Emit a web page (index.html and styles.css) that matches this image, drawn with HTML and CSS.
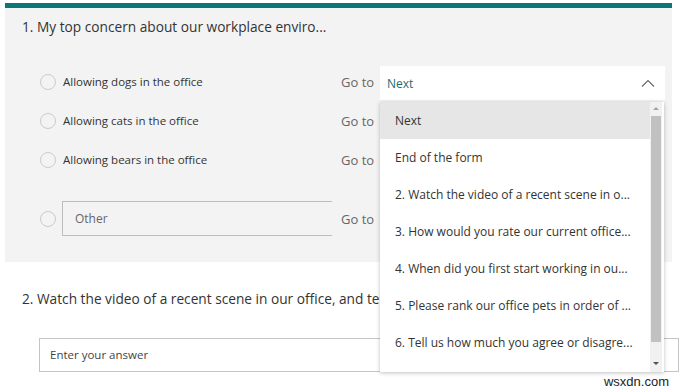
FILE: index.html
```html
<!DOCTYPE html>
<html lang="en">
<head>
    <meta charset="UTF-8">
    <meta name="viewport" content="width=device-width, initial-scale=1.0">
    <title>Branching</title>
    <link rel="stylesheet" href="styles.css">
</head>
<body>
    <div class="page">
        <div class="card">
            <div class="title">1. My top concern about our workplace enviro...</div>

            <div class="row">
                <span class="radio"></span>
                <span class="label">Allowing dogs in the office</span>
                <span class="goto">Go to</span>
                <div class="select-wrap">
                    <div class="select">
                        <span>Next</span>
                        <svg class="chevron" width="14" height="8" viewBox="0 0 14 8"><path d="M1 7.5 L7 1.5 L13 7.5" fill="none" stroke="#666" stroke-width="1.1"/></svg>
                    </div>
                    <div class="menu">
                        <div class="menu-list">
                            <div class="menu-item active">Next</div>
                            <div class="menu-item">End of the form</div>
                            <div class="menu-item">2. Watch the video of a recent scene in o...</div>
                            <div class="menu-item">3. How would you rate our current office...</div>
                            <div class="menu-item">4. When did you first start working in ou...</div>
                            <div class="menu-item">5. Please rank our office pets in order of ...</div>
                            <div class="menu-item">6. Tell us how much you agree or disagre...</div>
                            <div class="menu-item">7. How likely are you to recommend our tea...</div>
                        </div>
                        <div class="scrollbar">
                            <span class="arrow up"></span>
                            <span class="thumb"></span>
                            <span class="arrow down"></span>
                        </div>
                    </div>
                </div>
            </div>
            <div class="row">
                <span class="radio"></span>
                <span class="label">Allowing cats in the office</span>
                <span class="goto">Go to</span>
            </div>
            <div class="row">
                <span class="radio"></span>
                <span class="label">Allowing bears in the office</span>
                <span class="goto">Go to</span>
            </div>
            <div class="row other">
                <span class="radio"></span>
                <span class="label"><span class="other-box">Other</span></span>
                <span class="goto">Go to</span>
            </div>
        </div>

        <div class="question">
            <div class="title">2. Watch the video of a recent scene in our office, and tell us what you think about it</div>
            <div class="answer">Enter your answer</div>
        </div>
    </div>
    <div class="watermark">wsxdn.com</div>
</body>
</html>
```

FILE: styles.css
```css
/* Basic styles */
body {
    font-family: "Open Sans", "Noto Sans", sans-serif;
    margin: 0;
    padding: 0;
    background: #fff;
    color: #333;
    width: 680px;
    height: 392px;
    overflow: hidden;
    position: relative;
}
.page {
    padding: 3px 8px 0 5px;
}
.card {
    background-color: #f3f3f3;
    border-top: 5px solid #0b7675;
    padding: 8px 7px 14px 17px;
    height: 232px;
}
.title {
    font-size: 13.7px;
    line-height: 22px;
    white-space: nowrap;
    overflow: hidden;
    color: #333;
}
.row {
    display: grid;
    grid-template-columns: 23px 278px 39px 285px;
    align-items: center;
    height: 39px;
    margin-left: 18px;
}
.card .title {
    margin-bottom: 24px;
}
.row.other {
    margin-top: 20px;
}
.radio {
    width: 14px;
    height: 14px;
    border: 1px solid #cbcbcb;
    border-radius: 50%;
}
.label {
    font-size: 11.5px;
    color: #333;
}
.goto {
    font-size: 13px;
    color: #666;
}
.other-box {
    display: block;
    width: 257px;
    height: 33px;
    line-height: 33px;
    padding-left: 12px;
    border: 1px solid #bdbdbd;
    border-right: none;
    font-size: 12px;
    color: #666;
    margin-left: -1px;
}
.select-wrap {
    position: relative;
    margin-top: 3px;
}
.select {
    background: #fff;
    height: 34px;
    display: flex;
    align-items: center;
    justify-content: space-between;
    padding: 0 10px 0 7px;
    font-size: 12px;
    color: #1e6d70;
}
.menu {
    position: absolute;
    top: 36px;
    left: 0;
    width: 284px;
    height: 270px;
    background: #fff;
    box-shadow: 0 1px 4px rgba(0, 0, 0, 0.25);
    display: flex;
    overflow: hidden;
    z-index: 2;
}
.menu-list {
    flex: 1;
}
.menu-item {
    height: 37px;
    line-height: 37px;
    padding-left: 15px;
    font-size: 12px;
    color: #333;
    white-space: nowrap;
    overflow: hidden;
}
.menu-item.active {
    background: #e6e6e6;
}
.scrollbar {
    width: 12px;
    margin: 0 2px 0 0;
    background: #f1f1f1;
    display: flex;
    flex-direction: column;
    align-items: center;
}
.arrow {
    width: 0;
    height: 0;
    border-left: 3px solid transparent;
    border-right: 3px solid transparent;
}
.arrow.up {
    border-bottom: 3px solid #a3a3a3;
    margin: 5px 0 6px;
}
.arrow.down {
    border-top: 3px solid #505050;
    margin: 20px 0 0;
}
.thumb {
    width: 10px;
    height: 226px;
    background: #c1c1c1;
}
.question {
    padding: 26px 0 0 17px;
}
.question .title {
    width: 358px;
}
.answer {
    margin: 28px 0 0 17px;
    width: 628px;
    height: 32px;
    line-height: 32px;
    border: 1px solid #c4c4c4;
    padding-left: 10px;
    font-size: 11.5px;
    color: #444;
}
.watermark {
    position: absolute;
    right: 11px;
    bottom: 3px;
    font-family: "Liberation Sans", Arial, sans-serif;
    font-size: 13px;
    color: #222;
}
```
